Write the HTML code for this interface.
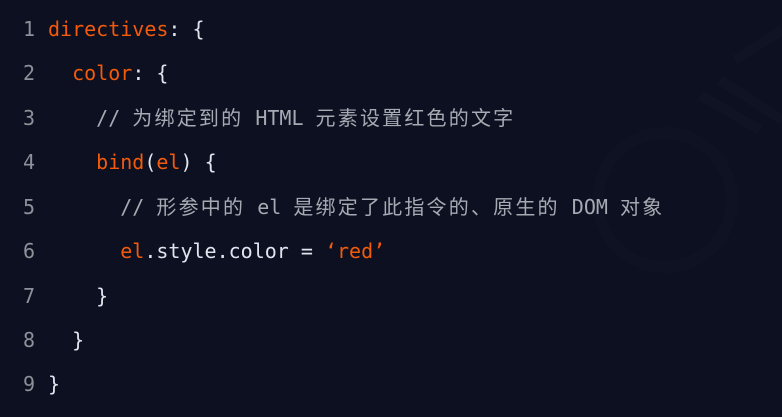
<!DOCTYPE html>
<html><head><meta charset="utf-8"><style>
html,body{margin:0;padding:0;}
body{width:782px;height:417px;background:#0c1020;overflow:hidden;position:relative;font-family:"DejaVu Sans Mono","Noto Sans CJK SC",monospace;font-size:20px;}
.l{position:absolute;left:0;height:44px;line-height:44px;white-space:pre;color:#dfe4ee;}
.n{position:absolute;left:23px;color:#8d919a;}
.c{position:absolute;left:48px;}
.o{color:#f25a0c;}
.g{color:#a6aab3;}
.z{letter-spacing:2.2px;}
</style></head><body>
<svg style="position:absolute;left:0;top:0" width="782" height="417">
<circle cx="665" cy="200" r="67" fill="none" stroke="#10142499" stroke-width="12"/>
<path d="M735 60 L782 30 M720 80 L782 120 M700 95 L760 130" stroke="#0f1324" stroke-width="10" fill="none"/>
</svg>
<div class="l" style="top:7px"><span class="n">1</span><span class="c"><span class="o">directives</span>: {</span></div>
<div class="l" style="top:51px"><span class="n">2</span><span class="c">  <span class="o">color</span>: {</span></div>
<div class="l" style="top:96px"><span class="n">3</span><span class="c g">    // <span class="z">为绑定到的</span> HTML <span class="z">元素设置红色的文字</span></span></div>
<div class="l" style="top:140px"><span class="n">4</span><span class="c">    <span class="o">bind</span>(<span class="o">el</span>) {</span></div>
<div class="l" style="top:185px"><span class="n">5</span><span class="c g">      // <span class="z">形参中的</span> el <span class="z">是绑定了此指令的、原生的</span> DOM <span class="z">对象</span></span></div>
<div class="l" style="top:229px"><span class="n">6</span><span class="c">      <span class="o">el</span>.style.color = <span class="o">‘red’</span></span></div>
<div class="l" style="top:274px"><span class="n">7</span><span class="c">    }</span></div>
<div class="l" style="top:318px"><span class="n">8</span><span class="c">  }</span></div>
<div class="l" style="top:362px"><span class="n">9</span><span class="c">}</span></div>
</body></html>
